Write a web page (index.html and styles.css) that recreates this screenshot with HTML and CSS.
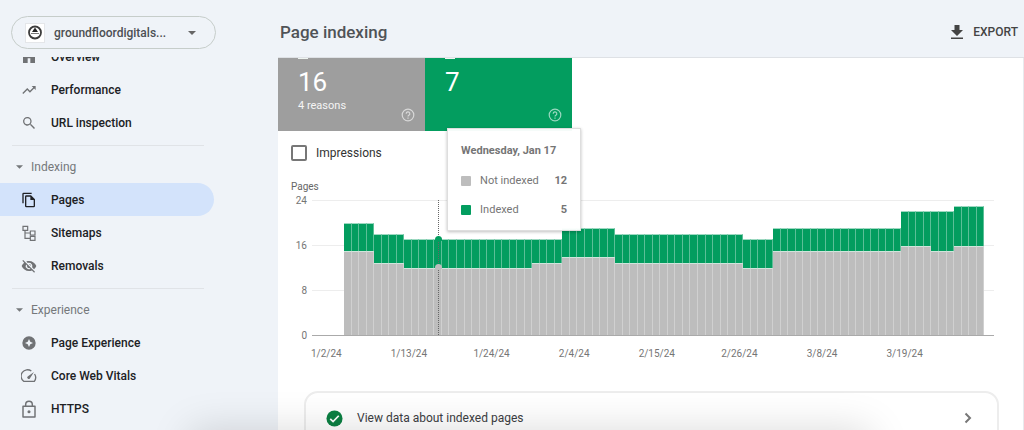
FILE: index.html
```html
<!DOCTYPE html>
<html lang="en">
<head>
<meta charset="utf-8">
<title>Page indexing</title>
<link rel="stylesheet" href="styles.css">
</head>
<body>
<div class="app">
  <aside class="sidebar">
    <button class="property" type="button">
      <svg class="favicon" viewBox="0 0 20 20" aria-hidden="true"><rect x=".5" y=".5" width="19" height="19" fill="#fff" stroke="#e4e6e9"/><circle cx="10" cy="9.500" r="6" fill="none" stroke="#3c3c3c" stroke-width="1.800"/><path d="M10 4.500l3 4.500H7z" fill="#222"/><path d="M6 10.500h8" stroke="#555" stroke-width=".8"/></svg>
      <span class="property-name">groundfloordigitals...</span>
      <svg class="caret" viewBox="0 0 8 4" aria-hidden="true"><path d="M0 0h8L4 4z"/></svg>
    </button>
    <nav class="nav">
      <div class="nav-list">
        <a class="item" href="#"><svg viewBox="0 0 24 24"><path d="M3 11l9-8 9 8v10h-7v-7h-4v7H3z"/></svg>Overview</a>
        <a class="item" href="#"><svg viewBox="0 0 24 24"><path d="M16 6l2.290 2.290-4.880 4.880-4-4L2 16.590 3.410 18l6-6 4 4 6.300-6.290L22 12V6z"/></svg>Performance</a>
        <a class="item" href="#"><svg viewBox="0 0 24 24"><path d="M15.500 14h-.79l-.28-.27A6.500 6.500 0 1 0 13.730 14.430l.27.28v.79l5.500 5.490L20.990 19.500zm-6 0a4.500 4.500 0 1 1 0-9 4.500 4.500 0 0 1 0 9z"/></svg>URL inspection</a>
        <hr>
        <button class="section" type="button"><svg viewBox="0 0 8 4"><path d="M0 0h8L4 4z"/></svg>Indexing</button>
        <a class="item active" href="#" aria-current="page"><svg viewBox="0 0 24 24"><path d="M16 1H4a2 2 0 0 0-2 2v14h2V3h12zm-1 4H8a2 2 0 0 0-2 2v14a2 2 0 0 0 2 2h11a2 2 0 0 0 2-2V11zM8 21V7h6v5h5v9z"/></svg>Pages</a>
        <a class="item" href="#"><svg viewBox="0 0 24 24"><path d="M3 2h7v6H3zM14 9h7v6h-7zM14 17h7v6h-7zM6 8v12h8M6 12h8" fill="none" stroke="currentColor" stroke-width="1.800"/></svg>Sitemaps</a>
        <a class="item" href="#"><svg viewBox="0 0 24 24"><path d="M12 7a5 5 0 0 1 4.640 6.830l2.920 2.920A11.800 11.800 0 0 0 23 12C21.270 7.610 17 4.500 12 4.500c-1.400 0-2.740.25-3.980.7l2.160 2.160C10.740 7.130 11.350 7 12 7zM2 4.270l2.740 2.740A11.800 11.800 0 0 0 1 12c1.730 4.390 6 7.500 11 7.500 1.550 0 3.030-.3 4.380-.84L19.730 22 21 20.730 3.270 3zM7.530 9.800l1.550 1.550A3 3 0 0 0 12.650 14.920l1.550 1.550A5 5 0 0 1 7.530 9.800zm4.310-.78l3.150 3.150.02-.16a3 3 0 0 0-3.170-2.990z"/></svg>Removals</a>
        <hr>
        <button class="section" type="button"><svg viewBox="0 0 8 4"><path d="M0 0h8L4 4z"/></svg>Experience</button>
        <a class="item" href="#"><svg viewBox="0 0 24 24"><path fill-rule="evenodd" d="M12 2a10 10 0 1 0 0 20 10 10 0 0 0 0-20zm0 4l1.900 4.100L18 12l-4.100 1.900L12 18l-1.900-4.100L6 12l4.100-1.900z"/></svg>Page Experience</a>
        <a class="item" href="#"><svg viewBox="0 0 24 24"><path d="M15.500 4.500A9.500 9.500 0 0 0 4 20h16a9.500 9.500 0 0 0 .3-11" fill="none" stroke="currentColor" stroke-width="2"/><path d="M19.500 6l-6 9.300a2.200 2.200 0 1 1-3-3z"/></svg>Core Web Vitals</a>
        <a class="item" href="#"><svg class="lock" viewBox="0 0 24 26"><path d="M3 9h18v16H3zM7 9V6.500a5 5 0 0 1 10 0V9" fill="none" stroke="currentColor" stroke-width="2.200" stroke-linejoin="round"/><circle cx="12" cy="17" r="2.300"/></svg>HTTPS</a>
      </div>
    </nav>
  </aside>
  <main class="main">
    <header class="header">
      <h1>Page indexing</h1>
      <button class="export" type="button"><svg viewBox="0 0 14 16" aria-hidden="true"><path d="M4.500 1h5v5H13l-6 6-6-6h3.500zM1 13.500h12V15H1z"/></svg>EXPORT</button>
    </header>
    <section class="report">
      <div class="totals">
        <div class="total not-indexed">
          <input type="checkbox" checked aria-label="Not indexed">
          <strong>16</strong><span>4 reasons</span>
          <button class="help" type="button" aria-label="Help"><svg viewBox="0 0 14 14"><circle cx="7" cy="7" r="5.800"/><path d="M5.200 5.700a1.800 1.800 0 1 1 2.700 1.500c-.6.400-.9.700-.9 1.400M7 9.600v1.100"/></svg></button>
        </div>
        <div class="total indexed">
          <input type="checkbox" checked aria-label="Indexed">
          <strong>7</strong>
          <button class="help" type="button" aria-label="Help"><svg viewBox="0 0 14 14"><circle cx="7" cy="7" r="5.800"/><path d="M5.200 5.700a1.800 1.800 0 1 1 2.700 1.500c-.6.400-.9.700-.9 1.400M7 9.600v1.100"/></svg></button>
        </div>
      </div>
      <label class="impressions"><input type="checkbox">Impressions</label>
      <div class="axis-title">Pages</div>
      <div class="chart">
        <div class="y-axis"><span>24</span><span>16</span><span>8</span><span>0</span></div>
        <div class="plot"><div class="bars" id="bars"></div></div>
      </div>
      <div class="x-axis"><span>1/2/24</span><span>1/13/24</span><span>1/24/24</span><span>2/4/24</span><span>2/15/24</span><span>2/26/24</span><span>3/8/24</span><span>3/19/24</span></div>
      <a class="view-data" href="#">
        <svg class="check" viewBox="0 0 18 18" aria-hidden="true"><circle cx="9" cy="9" r="8.500" fill="#0b8043"/><path d="M4.500 9.300l3 3 6-6.200" fill="none" stroke="#fff" stroke-width="1.800"/></svg>
        <span>View data about indexed pages</span>
        <svg class="chevron" viewBox="0 0 8 12" aria-hidden="true"><path d="M1.500 1.500L6 6l-4.500 4.500"/></svg>
      </a>
    </section>
  </main>
  <div class="bottom-shadow"></div>
</div>
<template id="tip">
  <div class="marker"><i class="dot dot-top"></i><i class="dot dot-mid"></i>
    <div class="tooltip">
      <b class="date">Wednesday, Jan 17</b>
      <div class="row"><i class="swatch gray"></i>Not indexed<b>12</b></div>
      <div class="row"><i class="swatch green"></i>Indexed<b>5</b></div>
    </div>
  </div>
</template>
<script src="chart.js"></script>
</body>
</html>
```
FILE: styles.css
```css
* { box-sizing: border-box; }
body { margin: 0; font-family: Roboto, "Liberation Sans", sans-serif; background: #eff3f8; color: #202124; }
button { font: inherit; border: 0; background: none; padding: 0; color: inherit; }
a { color: inherit; text-decoration: none; }
svg { display: block; flex: none; fill: currentColor; }

.app { position: relative; display: flex; height: 100vh; overflow: hidden; }
.sidebar { width: 278px; flex: none; display: flex; flex-direction: column; }
.property { display: flex; align-items: center; width: 205px; height: 33px; margin: 16px 0 8px 11px; padding: 0 19px 0 13px; border: 1px solid #c6cdca; border-radius: 17px; color: #4c4f53; }
.favicon { width: 20px; height: 20px; margin-right: 9px; }
.property-name { flex: 1; text-align: left; font-size: 12px; font-weight: 500; }
.caret { width: 8px; height: 4px; color: #666; }

.nav { flex: 1; min-height: 0; overflow: hidden; }
.nav-list { margin-top: -17px; }
.item { display: flex; align-items: center; gap: 14px; width: 214px; height: 33px; padding-left: 21px; font-size: 12px; font-weight: 500; }
.item svg { width: 16px; height: 16px; color: #707275; }
.item .lock { height: 18px; }
.item.active { background: #d3e3fb; border-radius: 0 17px 17px 0; }
.item.active svg { color: #202124; }
.nav hr { width: 192px; height: 1px; margin: 6px 0 5px 12px; border: 0; background: #e0e3e7; }
.section { display: flex; align-items: center; gap: 8px; height: 32px; padding-left: 16px; font-size: 12px; color: #75787b; }
.section svg { width: 7px; height: 4px; }

.main { flex: 1; min-width: 0; display: flex; flex-direction: column; }
.header { display: flex; align-items: center; justify-content: space-between; height: 58px; padding: 6px 6px 0 2px; border-bottom: 1px solid #dee1e5; }
h1 { margin: 0; font-size: 17px; font-weight: 500; color: #505357; }
.export { display: flex; align-items: center; gap: 9px; font-size: 12px; font-weight: 500; color: #444; }
.export svg { width: 14px; height: 16px; }
.report { flex: 1; min-height: 0; overflow: hidden; background: #fff; border-right: 1px solid #e8eaed; }

.totals { display: flex; margin-top: -15px; }
.total { position: relative; width: 147px; height: 88px; padding: 0 20px; color: #fff; }
.total.not-indexed { background: #9e9e9e; }
.total.indexed { background: #039d5f; }
.total input { appearance: none; display: block; width: 10px; height: 10px; margin: 6px 0 7px; border: 2px solid #eef4f0; }
.total strong { display: block; font-size: 26px; line-height: 32px; font-weight: 400; }
.total span { display: block; font-size: 11px; line-height: 16px; color: #f5f5f5; }
.help { position: absolute; right: 10px; bottom: 9px; opacity: .6; }
.help svg { width: 14px; height: 14px; fill: none; stroke: #fff; stroke-width: 1.2; }

.impressions { display: flex; align-items: center; gap: 9px; margin: 14px 0 0 13px; font-size: 12px; line-height: 16px; color: #333; }
.impressions input { appearance: none; width: 16px; height: 16px; margin: 0; border: 2px solid #777; border-radius: 2px; }
.axis-title { margin: 19px 0 6px 13px; font-size: 10px; line-height: 14px; color: #666; }
.chart { display: flex; height: 136px; margin-right: 29px; }
.y-axis { display: flex; flex-direction: column; justify-content: space-between; width: 29px; margin: -6px 5px -6px 0; text-align: right; font-size: 10px; line-height: 13px; color: #757575; }
.plot { flex: 1; display: flex; padding: 0 10px 0 32px; border-bottom: 1px solid #aaa; background: repeating-linear-gradient(to bottom, #ededed 0 1px, transparent 1px 45px); }
.bars { position: relative; flex: 1; display: flex; align-items: flex-end; }
.bar { position: relative; flex: 1; display: flex; flex-direction: column; border-top: 1px solid #9fd9c2; border-right: 1px solid #5cbf97; background: #039d5f; }
.bar-base { margin-top: auto; margin-right: -1px; border-top: 1px solid #cfe6dc; border-right: 1px solid #d0d0d0; background: #bdbdbd; }

.marker { position: absolute; top: 0; bottom: 0; width: 0; border-left: 1px dotted #666; }
.dot { position: absolute; left: -4px; width: 7px; height: 5px; border-radius: 4px 4px 0 0; }
.dot-top { bottom: 94px; background: #039d5f; }
.dot-mid { bottom: 66px; background: #bdbdbd; }
.tooltip { position: absolute; left: 8px; top: -72px; width: 134px; height: 103px; padding: 15px 13px; border: 1px solid #dedede; background: rgba(255, 255, 255, .96); box-shadow: 0 1px 3px rgba(0, 0, 0, .25); font-size: 11px; color: #757575; white-space: nowrap; }
.date { display: block; line-height: 14px; margin-bottom: 8px; }
.row { display: flex; align-items: center; height: 29px; }
.row b { margin-left: auto; }
.swatch { width: 10px; height: 10px; margin-right: 9px; border-radius: 1px; }
.gray { background: #bdbdbd; }
.green { background: #039d5f; }

.x-axis { display: flex; margin: 11px 77px 0 7px; font-size: 10px; line-height: 14px; color: #757575; }
.x-axis span { flex: 1; text-align: center; }
.view-data { display: flex; align-items: center; height: 54px; margin: 30px 24px 0 26px; padding: 0 25px 0 20px; border: 2px solid #ededed; border-radius: 14px; font-size: 12px; color: #3c4043; }
.view-data span { flex: 1; margin-left: 14px; }
.check { width: 17px; height: 17px; }
.chevron { width: 8px; height: 12px; fill: none; stroke: #777; stroke-width: 2; }
.bottom-shadow { position: absolute; left: 190px; right: 154px; top: 100%; height: 60px; pointer-events: none; box-shadow: 0 0 40px rgba(0, 0, 0, .15); }
```
FILE: chart.js
```js
// Runs of consecutive days: [days, total pages, not indexed pages]
const runs = [
  [4, 20, 15], [4, 18, 13], [17, 17, 12], [4, 17, 13], [7, 19, 14], [17, 18, 13],
  [4, 17, 12], [17, 19, 15], [4, 22, 16], [3, 22, 15], [4, 23, 16]
];
const selected = 12;
const bars = document.getElementById('bars');
let count = 0;
for (const [days, total, notIndexed] of runs) {
  for (let i = 0; i < days; i++) {
    const bar = document.createElement('div');
    bar.className = 'bar';
    bar.style.height = (total / 24 * 100) + '%';
    const base = document.createElement('div');
    base.className = 'bar-base';
    base.style.height = (notIndexed / total * 100) + '%';
    bar.append(base);
    bars.append(bar);
    count++;
  }
}
bars.append(document.getElementById('tip').content.cloneNode(true));
bars.querySelector('.marker').style.left = ((selected + 0.5) / count * 100) + '%';
```
